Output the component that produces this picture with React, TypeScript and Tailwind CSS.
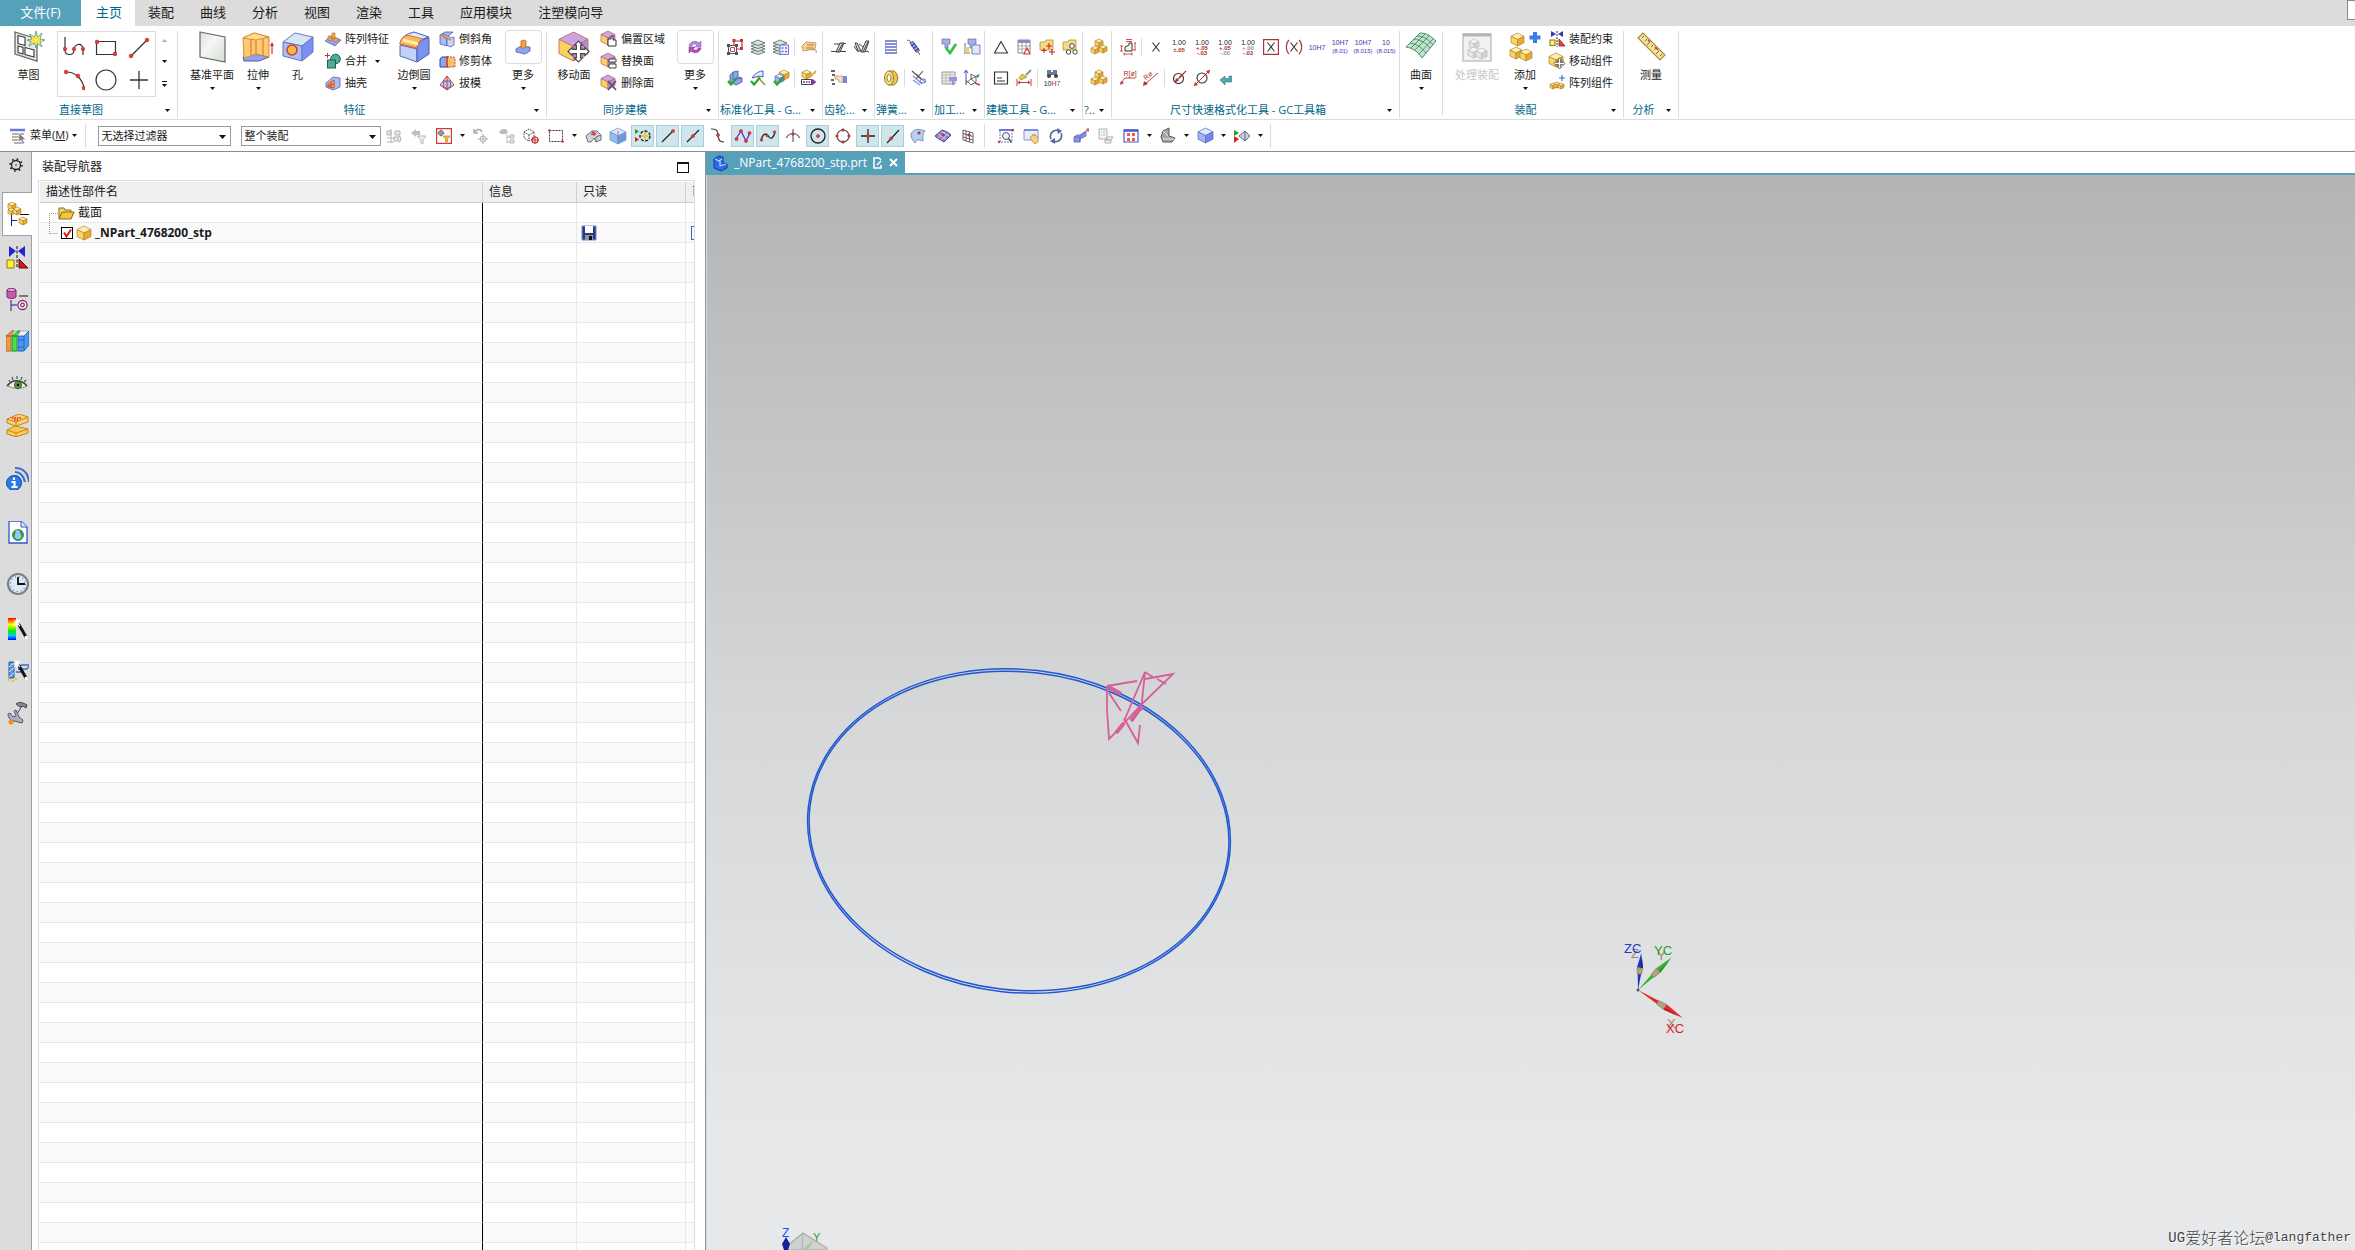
import React from 'react';

type CubeColors = [string, string, string, string];

const GOLD: CubeColors = ['#ffefb4', '#fad464', '#e6ab34', '#b5852a'];
const BLUE: CubeColors = ['#dfeaf8', '#9db4f5', '#6f86ea', '#5a6abc'];
const GREY: CubeColors = ['#f4f4f4', '#e6e6e6', '#d2d2d2', '#bcbcbc'];
const PINK: CubeColors = ['#d0a4e6', '#fbd065', '#b98bd8', '#b0605a'];

const Cube: React.FC<{ x: number; y: number; s: number; c?: CubeColors }> = ({ x, y, s, c = GOLD }) => {
  const h = s / 2;
  const q = s / 4;
  return (
    <g stroke={c[3]} strokeWidth={s > 16 ? 1 : 0.7} strokeLinejoin="round">
      <polygon points={`${x + h},${y} ${x + s},${y + q} ${x + h},${y + h} ${x},${y + q}`} fill={c[0]} />
      <polygon points={`${x},${y + q} ${x + h},${y + h} ${x + h},${y + s} ${x},${y + s - q}`} fill={c[1]} />
      <polygon points={`${x + s},${y + q} ${x + h},${y + h} ${x + h},${y + s} ${x + s},${y + s - q}`} fill={c[2]} />
    </g>
  );
};

const Dots: React.FC<{ at: number[][]; r?: number }> = ({ at, r = 1.6 }) => (
  <>
    {at.map(([x, y]) => (
      <circle key={`${x}-${y}`} cx={x} cy={y} r={r} fill="#e23a3a" stroke="#b02020" strokeWidth="0.5" />
    ))}
  </>
);

const Check: React.FC = () => <path d="M1 11l3 3.500L10 7.500" fill="none" stroke="#2fa52f" strokeWidth="2.2" />;

const FourWay: React.FC<{ x: number; y: number; s: number }> = ({ x, y, s }) => (
  <path
    transform={`translate(${x} ${y}) scale(${s / 20})`}
    d="M10 0l4 4h-2v4h4V6l4 4-4 4v-2h-4v4h2l-4 4-4-4h2v-4H4v2l-4-4 4-4v2h4V4H6z"
    fill="#fff"
    stroke="#4a4a4a"
    strokeWidth={s > 16 ? 1.1 : 1.6}
  />
);

const Wand: React.FC = () => (
  <>
    <path d="M9 4l8 14" stroke="#111" strokeWidth="3" />
    <path d="M16.5 17l1.500 3" stroke="#fff" strokeWidth="2.5" />
    <path d="M8 0v8M4 4h8M5 1l6 6M11 1L5 7" stroke="#fff" strokeWidth="1.2" />
  </>
);

const Tolerance: React.FC<{ top: string; a?: string; b: string; ca?: string; cb?: string }> = ({
  top, a, b, ca = '#b03030', cb = '#b03030',
}) => (
  <g fontFamily="Liberation Sans, sans-serif" textAnchor="middle">
    <text x="8" y="6" fontSize="7" fill="#222">{top}</text>
    {a && <text x="8" y="11" fontSize="6" fontWeight="bold" fill={ca}>{a}</text>}
    <text x="8" y={a ? 16 : 13} fontSize="6" fontWeight="bold" fill={cb}>{b}</text>
  </g>
);

const Fit: React.FC<{ top: string; bottom?: string }> = ({ top, bottom }) => (
  <g fontFamily="Liberation Sans, sans-serif" textAnchor="middle" fill="#3a34b4">
    <text x="8" y={bottom ? 6 : 11} fontSize="7">{top}</text>
    {bottom && <text x="8" y="14" fontSize="6">{bottom}</text>}
  </g>
);

// small icons are drawn on a 16 unit grid
const small: Record<string, React.ReactNode> = {
  patternFeature: (
    <>
      <path d="M0 10l6-5 10 4-6 6z" fill="#8fa6ee" stroke="#5062a8" strokeWidth=".7" />
      <path d="M3 9V5h3v5zM7 7V2h3v6zM9 11V7h4v3z" fill="#f6a94a" stroke="#b66a1a" strokeWidth=".6" />
    </>
  ),
  unite: (
    <>
      <path d="M2.5 0v5M0 2.500h5" stroke="#c83030" />
      <circle cx="10.5" cy="6" r="4.8" fill="#4fae9c" stroke="#245c50" />
      <rect x="2.5" y="7" width="8" height="8" fill="#4fae9c" stroke="#245c50" />
    </>
  ),
  shell: (
    <>
      <path d="M1 8l7-6 7 1v9l-7 3-7-3z" fill="#a9bbf4" stroke="#5062a8" strokeWidth=".8" />
      <path d="M3 9l6-4v8l-6-1z" fill="#f7b05a" stroke="#c0542a" />
      <path d="M6 7v6M9 9l-6 2" stroke="#d63c20" />
    </>
  ),
  chamfer: (
    <>
      <path d="M1 4l5-3h8l-6 5v9l-7-2z" fill="#a9bbf4" stroke="#4a5bb0" strokeWidth=".8" />
      <path d="M4 3l9 4 2-1v8l-4 2-3-2V8L3 5z" fill="#c9d6fb" stroke="#4a5bb0" strokeWidth=".8" />
      <path d="M2 4l10 5" stroke="#f0822a" strokeWidth="1.8" />
    </>
  ),
  trimBody: (
    <>
      <path d="M1 6l2-2h7v10H1z" fill="#8fa6ee" stroke="#33409c" />
      <path d="M8 4h7l1 2v8H8z" fill="#f9c06a" stroke="#c04a2a" strokeDasharray="2 1" />
      <path d="M8 3v11" stroke="#c04a2a" strokeWidth="1.5" />
    </>
  ),
  draft: (
    <>
      <path d="M8 1L1 10l7 5 7-5z" fill="#f4d0c8" stroke="#c0403a" />
      <path d="M5 6h6l1 5-4 3-4-3z" fill="#b7c6f8" stroke="#5062a8" />
      <path d="M8 1v14" stroke="#c0403a" />
    </>
  ),
  offsetRegion: (
    <>
      <Cube x={0} y={0} s={14} c={PINK} />
      <path d="M7 8h3V5h2v4h3v6H7z" fill="#fff" stroke="#333" />
    </>
  ),
  replaceFace: (
    <>
      <Cube x={0} y={0} s={14} c={PINK} />
      <path d="M8 6h7v3H8zM8 11h7v4H8z" fill="#fff" stroke="#444" />
    </>
  ),
  deleteFace: (
    <>
      <Cube x={0} y={0} s={14} c={PINK} />
      <path d="M7 6l8 9M15 6l-8 9" stroke="#555" strokeWidth="1.7" />
    </>
  ),
  constraints: (
    <>
      <path d="M2 0l5 3-5 3zM14 0L9 3l5 3z" fill="#3a34c0" />
      <path d="M8 0v16" stroke="#333" strokeDasharray="2 1" />
      <rect x="1" y="9" width="5" height="5.5" fill="#fff36a" stroke="#8a7a10" />
      <path d="M10 8v7h6z" fill="#e04848" stroke="#8a1a1a" strokeWidth=".8" />
    </>
  ),
  moveComponent: (
    <>
      <Cube x={0} y={0} s={14} />
      <FourWay x={5} y={5} s={11} />
    </>
  ),
  patternComponent: (
    <>
      <path d="M13 0v6M10 3h6" stroke="#3a6ee0" strokeWidth="1.2" />
      <Cube x={1} y={8} s={6} />
      <Cube x={5} y={7} s={6} />
      <Cube x={9} y={8} s={6} />
    </>
  ),
  attrTool: (
    <>
      <path d="M7 2h8v8H7z" fill="none" stroke="#d03030" strokeWidth="1.2" />
      <path d="M1.500 6.500h8v8h-8z" fill="#fff" stroke="#555" />
      <path d="M3.500 8.500h4v4h-4z" fill="none" stroke="#c05050" />
      <path d="M0 5h3v3H0zM8 5h3v3H8zM0 13h3v3H0zM8 13h3v3H8z" fill="#4a5068" />
      <path d="M5.500 0h3v3h-3zM13 0h3v3h-3zM13 8h3v3h-3z" fill="#d03030" />
    </>
  ),
  layers: (
    <>
      {[13, 10, 7, 4].map((y) => (
        <path key={y} d={`M1 ${y}l7-3 7 3-7 2.500z`} fill="#cfe6d8" stroke="#51615c" strokeWidth=".8" />
      ))}
    </>
  ),
  layerList: (
    <>
      {[13, 10, 7, 4].map((y) => (
        <path key={y} d={`M0 ${y}l7-3 7 3-7 2.500z`} fill="#cfe6d8" stroke="#51615c" strokeWidth=".8" />
      ))}
      <path d="M7 6h8.500v9.500H7z" fill="#eef0ff" stroke="#6a72dc" />
      <path d="M8.500 9h2M12 9h2M8.500 12.500h2M12 12.500h2" stroke="#6a72dc" strokeWidth="1.5" />
    </>
  ),
  tag: (
    <>
      <path d="M1 7l4-4 10 1-1 6-12 2z" fill="#fad096" stroke="#d09a50" />
      <path d="M6 6h7M5 9h7M11 11c3-1 5 0 4 3" fill="none" stroke="#8a6a40" strokeWidth=".8" />
    </>
  ),
  blockCheck: (
    <>
      <path d="M3 5l3-3 5-1v6l4 1v4l-6 3-6-3z" fill="#8ea2ee" stroke="#4356a6" strokeWidth=".8" />
      <path d="M6 2v8l9-2" fill="none" stroke="#4356a6" strokeWidth=".7" />
      <Check />
    </>
  ),
  draftCheck: (
    <>
      <path d="M2 8c3-5 8-7 11-7v6l-4-1z" fill="#e8edff" stroke="#4356c6" />
      <path d="M7 6l8 9" stroke="#a89040" strokeWidth="1.6" />
      <Check />
    </>
  ),
  asmCheck: (
    <>
      <Cube x={6} y={0} s={10} />
      <Cube x={2} y={4} s={9} c={BLUE} />
      <Check />
    </>
  ),
  partEdit: (
    <>
      <Cube x={1} y={0} s={9} />
      <path d="M9 7l6-6" stroke="#d0b040" strokeWidth="1.8" />
      <path d="M.5 9.500h10v5H.5z" fill="#fff" stroke="#444" />
      <path d="M2 12h2M5 12h1.500M7.500 12h1.500" stroke="#6a30a0" strokeWidth="1.5" />
      <path d="M11 8.500l4.500 3.500-4.500 3.500z" fill="#8a3ab0" />
    </>
  ),
  gear1: (
    <>
      <path d="M5 13L9 4h4L9 13z" fill="#d4d8d8" stroke="#444" />
      <path d="M0 12.500h5M3 5h6M13 4.500h2M9 12.500h6M7 13l5-9" fill="none" stroke="#444" />
    </>
  ),
  gear2: (
    <>
      <path d="M1 4l3 8h3L3 4zM7 13l5-11h3l-4 11z" fill="#d4d8d8" stroke="#444" />
      <path d="M0 7l4 6M9 13l5-10M11 12l4 1M5 5l4 3" fill="none" stroke="#444" />
    </>
  ),
  gearHand: (
    <>
      <path d="M0 1h4M1 5h3M0 10h3M1 14h3" stroke="#333" strokeWidth="1.3" />
      <path d="M4 6h8v6H8L7 9H4z" fill="#fbe0c0" stroke="#b08850" strokeWidth=".7" />
      <path d="M12 6h4v7h-4z" fill="#7a86d8" />
    </>
  ),
  spring: (
    <>
      {[2, 5, 8, 11, 14].map((y) => (
        <path key={y} d={`M2 ${y}h12`} stroke="#5560c0" strokeWidth="1.4" />
      ))}
      <path d="M2.500 1v14M13.500 1v14" stroke="#8890c8" strokeWidth=".8" />
    </>
  ),
  springDiag: (
    <>
      <path d="M1 2c2-2 4 0 3 2M12 13c1 1 2 2 1 3" fill="none" stroke="#555" />
      <path d="M4 4l3-1.500 6.500 9-3 2z" fill="#a0a8e0" stroke="#4450a0" />
      <path d="M5 7l4-2.500M7 9.500l4-2.500M9 12l4-2.500" stroke="#333c90" strokeWidth="1.1" />
    </>
  ),
  springDisc: (
    <>
      <path d="M6 1h5c5 3 5 11 0 14H6z" fill="#e8c650" stroke="#9a7a20" />
      <ellipse cx="6" cy="8" rx="4.5" ry="7" fill="#f7e080" stroke="#9a7a20" />
      <ellipse cx="6" cy="8" rx="2" ry="3.5" fill="#fff" stroke="#9a7a20" />
    </>
  ),
  springCut: (
    <>
      <path d="M2 6l9 8M5 4l9 8M2 10l7 5" stroke="#8090d8" strokeWidth="1.2" />
      <path d="M1 1l9 8M12 1L5 9" stroke="#555" strokeWidth="1.1" />
      <ellipse cx="12" cy="11" rx="3" ry="2" fill="none" stroke="#6874c8" />
    </>
  ),
  camCheck: (
    <>
      <path d="M1 0h8v5H7v4H4V5H1z" fill="#a8b0e4" stroke="#6068a8" strokeWidth=".7" />
      <path d="M5 9l4 5 6-9" fill="none" stroke="#35c042" strokeWidth="2.8" />
    </>
  ),
  camList: (
    <>
      <path d="M4 0h8v5h-2v4H6V5H4z" fill="#a8b0e4" stroke="#6068a8" strokeWidth=".7" />
      <path d="M1 4v10M0 14h6" stroke="#6068a8" />
      <path d="M8 6h8v9H8z" fill="#e0e6fb" stroke="#7a84c0" />
      <path d="M1 8h4v6H1z" fill="#e6d070" />
    </>
  ),
  camTable: (
    <>
      <path d="M1 2h13v12H1z" fill="#f0efe0" stroke="#999" />
      <path d="M1 5h13M1 8h13M1 11h13M5 2v12M9 2v12" stroke="#b4b4b4" strokeWidth=".8" />
      <path d="M8 7h8v4h-3v4h-2v-4H8z" fill="#8f98e0" />
    </>
  ),
  camAxis: (
    <>
      <path d="M2 15V1M0 3l2-3 2 3" stroke="#4450b8" fill="none" />
      <path d="M2 13l5-4V4l5 3v5l-5 3-5-5M7 9l8-4M7 9l6 5" fill="none" stroke="#555" strokeWidth=".9" />
      <path d="M12 6l4-2-2 4z" fill="#2f9a4a" />
      <path d="M11 13l5 2" stroke="#c04040" strokeWidth="1.5" />
    </>
  ),
  triangle: <path d="M8 2.500L1.500 14h13z" fill="none" stroke="#333" strokeWidth="1.1" />,
  tableTri: (
    <>
      <path d="M2 1h12v13H2z" fill="#fff" stroke="#888" />
      <path d="M2 1h12v3H2z" fill="#8890c0" />
      <path d="M2 7h12M2 10h12M6 4v10M10 4v10" stroke="#b08a9a" strokeWidth=".8" />
      <path d="M11 9l-3 6h6z" fill="#fff" stroke="#d03030" strokeWidth="1.1" />
    </>
  ),
  folderStar: (
    <>
      <path d="M1 3h5l1-2h7v10H1z" fill="#f2dc88" stroke="#b09030" strokeWidth=".8" />
      <path d="M10 4v6M7 7h6M5 9v5M2.500 11.500h5M13 10v6M10 13h6" stroke="#c82020" strokeWidth="1.1" />
    </>
  ),
  folderRings: (
    <>
      <path d="M1 3h5l1-2h7v10H1z" fill="#f2dc88" stroke="#b09030" strokeWidth=".8" />
      <g fill="#fff" stroke="#444">
        <circle cx="10" cy="7" r="2.4" />
        <circle cx="6.5" cy="13" r="2.2" />
        <circle cx="13" cy="13" r="2.2" />
      </g>
    </>
  ),
  note: (
    <>
      <path d="M1.500 2h13v12h-13z" fill="#fff" stroke="#333" strokeWidth="1.2" />
      <path d="M4 8h5M4 11h8" stroke="#333" />
    </>
  ),
  brushDim: (
    <>
      <path d="M15 0l-5 5" stroke="#8a94a0" strokeWidth="2" />
      <path d="M6 4l5 3-6 3-2-2z" fill="#e8c850" stroke="#a08020" strokeWidth=".7" />
      <path d="M1 9v7M15 9v7M2 12.500h12M4 11l-2 1.500L4 14M12 11l2 1.500-2 1.500" fill="none" stroke="#c83a3a" />
    </>
  ),
  findFit: (
    <>
      <path d="M3 0h4v4H3zM9 0h4v4H9zM3 2h10v3H3z" fill="#6a7a98" />
      <circle cx="5" cy="6" r="2" fill="#444" />
      <circle cx="12" cy="6" r="2" fill="#444" />
      <text x="8" y="16" fontSize="7" textAnchor="middle" fontFamily="Liberation Sans, sans-serif" fill="#222">
        10<tspan fill="#b03030">H7</tspan>
      </text>
    </>
  ),
  stack: (
    <>
      <Cube x={4} y={0} s={8} />
      <Cube x={0} y={7} s={8} />
      <Cube x={8} y={6} s={8} />
    </>
  ),
  dimAuto: (
    <>
      <path d="M5 12V8l4-2V4h3v8z" fill="#f4f4f4" stroke="#333" />
      <path d="M6 .5h6M6 2.500h6M0 7h3M1.500 7v5M0 12h3M14 4h2M15 4v7M13 11h3M4 15h8M4 13.500v3M12 13.500v3" stroke="#c83a3a" strokeWidth=".9" />
    </>
  ),
  x: <path d="M4.500 3.500l7 9M11.500 3.500l-7 9" stroke="#333" strokeWidth="1.1" />,
  tolSym: <Tolerance top="1.00" b="±.05" />,
  tolBoth: <Tolerance top="1.00" a="+.05" b="-.03" />,
  tolUpper: <Tolerance top="1.00" a="+.05" b="-.00" cb="#999" />,
  tolLower: <Tolerance top="1.00" a="+.00" b="-.03" ca="#999" />,
  boxX: (
    <>
      <path d="M.6 .6h14.800v14.800H.6z" fill="#fff" stroke="#a03a3a" strokeWidth="1.2" />
      <path d="M4.500 3.500l7 9M11.500 3.500l-7 9" stroke="#333" strokeWidth="1.1" />
    </>
  ),
  parenX: (
    <>
      <path d="M3 1C-.5 4-.5 12 3 15M13 1c3.500 3 3.500 11 0 14" fill="none" stroke="#b03a3a" strokeWidth="1.2" />
      <path d="M4.500 3.500l7 9M11.500 3.500l-7 9" stroke="#333" strokeWidth="1.1" />
    </>
  ),
  fit: <Fit top="10H7" />,
  fitLimits: <Fit top="10H7" bottom="(8.01)" />,
  fitDev: <Fit top="10H7" bottom="(8.015)" />,
  fitOnly: <Fit top="10" bottom="(8.015)" />,
  leader: (
    <>
      <path d="M15 8H5l-4 5" fill="none" stroke="#b04a4a" />
      <path d="M0 15l1-4 3 2z" fill="#b03030" />
      <text x="10" y="6" fontSize="7" textAnchor="middle" fontFamily="Liberation Sans, sans-serif" fill="#b03030">R[ø]</text>
    </>
  ),
  leaderDiag: (
    <>
      <path d="M2 14L15 3" stroke="#b04a4a" />
      <path d="M0 16l1-5 4 3z" fill="#b03030" />
      <text x="1" y="9" fontSize="7" fontFamily="Liberation Sans, sans-serif" fill="#b03030" transform="rotate(-38 4 7)">Rø</text>
    </>
  ),
  diaIn: (
    <>
      <circle cx="7.5" cy="8.5" r="5" fill="none" stroke="#333" strokeWidth="1.1" />
      <path d="M4 12L15 1" stroke="#c02a2a" strokeWidth="1.1" />
      <path d="M4 12l1-4 3 3zM11 5l-3 1 2 2z" fill="#c02a2a" />
    </>
  ),
  diaOut: (
    <>
      <circle cx="8" cy="8" r="5" fill="none" stroke="#333" strokeWidth="1.1" />
      <path d="M0 16L16 0" stroke="#c02a2a" />
      <path d="M16 0l-4 1 3 3zM0 16l1-4 3 3z" fill="#c02a2a" />
    </>
  ),
  back: <path d="M3 10l5-4v2.500h4V6h2.500v6H8v3z" fill="#52a7b5" stroke="#2b7480" strokeWidth=".6" />,
  menu: (
    <>
      <path d="M0 2h15" stroke="#6a78d8" strokeWidth="2.5" />
      <path d="M2 6h12M2 9h9M2 12h11M4 15h9" stroke="#999" strokeWidth="1.4" />
      <path d="M9 5v9l2-2 2 4 1.500-1-2-3.500h3z" fill="#777" stroke="#eee" strokeWidth=".6" />
    </>
  ),
  treeOff: <path d="M1 3h4v4H1zM5 1v14M1 10h8M1 14h7M9 3h5v4H9zM8 9h4v4H8zM12 8a3 3 0 1 1 0 6" fill="#e8e8e8" stroke="#b4b4b4" />,
  filterOff: (
    <>
      <path d="M0 5l5-4v2h4v4H5v2z" fill="#bdbdbd" />
      <path d="M6 8h9l-3 4v4l-2-1v-3z" fill="#eee" stroke="#bbb" />
    </>
  ),
  filterBox: (
    <>
      <path d="M.6 .6h14.800v14.800H.6z" fill="#fff" stroke="#d03a3a" strokeWidth="1.2" />
      <circle cx="5" cy="5" r="2.4" fill="none" stroke="#555" />
      <path d="M5 1.500v7M1.500 5h7" stroke="#555" strokeWidth=".8" />
      <path d="M7 8h7l-2.500 3v3h-2v-3z" fill="#f0b838" stroke="#b08018" strokeWidth=".6" />
    </>
  ),
  rotOff: (
    <>
      <path d="M1 5V1M1 5h4M1 5c3-5 7-4 8-1" fill="none" stroke="#aaa" strokeWidth="1.4" />
      <circle cx="10" cy="11" r="3" fill="none" stroke="#b0b0b0" />
      <path d="M10 6v10M5 11h10" stroke="#b0b0b0" />
    </>
  ),
  binOff: (
    <>
      <path d="M1 4l3-3h4l2 3-2 2H3z" fill="#bbb" />
      <path d="M9 6v9M9 9h3M9 14h3M12 7h4v3h-4zM12 12h4v3h-4z" fill="#e2e2e2" stroke="#b8b8b8" />
    </>
  ),
  pickCube: (
    <>
      <path d="M6 1L1 4v6l5 3 5-3V4zM1 4l5 3 5-3M6 7v6" fill="none" stroke="#333" strokeDasharray="1.5 1" strokeWidth=".9" />
      <circle cx="12" cy="12" r="3" fill="none" stroke="#c83030" strokeWidth="1.2" />
      <path d="M12 8v8M8 12h8" stroke="#c83030" />
    </>
  ),
  pickRect: (
    <>
      <path d="M1.500 2.500h13v11h-13z" fill="none" stroke="#333" strokeDasharray="2 1" />
      <Dots at={[[1.5, 2.5], [14.5, 13.5]]} r={1.1} />
    </>
  ),
  body: (
    <>
      <path d="M1 8l6-5h5l4 4v5l-5 2-2-4-3 4H3z" fill="#ccd4de" stroke="#6a727a" />
      <path d="M7 4l4 2M6 6l4 1" stroke="#d84040" strokeWidth="1.5" />
      <path d="M11 14V9l5-2" fill="none" stroke="#6a727a" />
    </>
  ),
  blueBox: (
    <>
      <Cube x={0} y={0} s={16} c={['#d4e8fa', '#8cc0f2', '#6a9ae6', '#6a90cc']} />
      <path d="M8 3v9" stroke="#e05a70" />
    </>
  ),
  snapAll: (
    <>
      <path d="M0 1l4 2.500L0 6z" fill="#22a033" />
      <path d="M0 9l4 2.500L0 14z" fill="#d82222" />
      <circle cx="10" cy="8" r="5" fill="none" stroke="#222" strokeWidth="1.4" strokeDasharray="3 1.5" />
      <path d="M10 4v8M6 8h8" stroke="#e8c020" strokeWidth="1.6" />
    </>
  ),
  snapEnd: (<><path d="M2 14L13 3" stroke="#222" strokeWidth="1.2" /><Dots at={[[13, 3]]} /></>),
  snapMid: (<><path d="M2 14L14 2" stroke="#222" strokeWidth="1.2" /><Dots at={[[8, 8]]} /></>),
  snapCtrl: (<><path d="M1 1c8 0 6 3 7 7s1 6 6 6" fill="none" stroke="#444" strokeWidth="1.2" /><Dots at={[[8, 7]]} /></>),
  snapPoly: (<><path d="M1 11L6 3l5 10 4-8" fill="none" stroke="#7a34c0" strokeWidth="1.4" /><Dots at={[[1.5, 11], [6, 3], [11, 13], [14.5, 5]]} /></>),
  snapSpline: (<><path d="M1 12c3-9 6-6 8-3s5 0 6-5" fill="none" stroke="#222" strokeWidth="1.3" /><Dots at={[[1.5, 12], [7, 7.5], [14.5, 4]]} r={1.3} /></>),
  snapInt: (<><path d="M1 10c4-6 10-6 14 0M8 1v13" fill="none" stroke="#555" strokeWidth="1.1" /><Dots at={[[8, 6]]} r={1.3} /></>),
  snapCenter: (<><circle cx="8" cy="8" r="7" fill="none" stroke="#222" strokeWidth="1.3" /><Dots at={[[8, 8]]} /></>),
  snapQuad: (<><circle cx="8" cy="8" r="6" fill="none" stroke="#555" strokeWidth="1.1" /><Dots at={[[8, 2], [8, 14], [2, 8], [14, 8]]} r={1.3} /></>),
  snapPoint: (<><path d="M8 1v14M1 8h14" stroke="#222" strokeWidth="1.3" /><Dots at={[[8, 8]]} /></>),
  snapOn: (<><path d="M2 15L14 2" stroke="#222" strokeWidth="1.2" /><Dots at={[[6, 10.5]]} /></>),
  snapFace: (
    <>
      <path d="M1 6c3-6 8-5 14-3-3 3-2 6-2 10-5-2-7-1-8 2C3 12 1 11 1 6z" fill="#b4d0f6" stroke="#7b8fb8" />
      <Dots at={[[9, 5]]} r={1.3} />
    </>
  ),
  snapGrid: (
    <>
      <path d="M0 8l7-6c3 1 6 2 9 5l-7 7C6 12 3 11 0 8z" fill="#8a84d0" stroke="#4a4680" />
      <path d="M3 6l8 5M6 3l8 5M3 10l7-6M6 12l7-6" stroke="#dcd8ff" strokeWidth=".8" />
      <Dots at={[[8, 7]]} r={1.3} />
    </>
  ),
  snapMesh: (
    <>
      <path d="M3 2l10 3v10L3 12zM3 5.500l10 3M3 9l10 3M6 3v10M9.500 4v10" fill="none" stroke="#555" strokeWidth=".9" />
      <Dots at={[[9, 7]]} r={1.3} />
    </>
  ),
  zoomFit: (
    <>
      <path d="M1 2h14" stroke="#6a78d8" strokeWidth="2" />
      <path d="M2 3v11h12V3" fill="none" stroke="#6a78d8" strokeDasharray="2 1" />
      <circle cx="8" cy="8" r="3.5" fill="#eef" stroke="#555" />
      <path d="M10.500 10.500l3 4" stroke="#555" strokeWidth="1.5" />
      <Dots at={[[15, 2], [1, 14]]} r={1} />
    </>
  ),
  pan: (
    <>
      <path d="M1 2h14v10H1z" fill="#e8ebf8" stroke="#8c94c8" />
      <path d="M1 2h14" stroke="#6a78d8" strokeWidth="1.5" />
      <path d="M7 9l2-1 1-2 1 2 1-2 1 2 2 1v5l-3 2-3-3z" fill="#f4cf90" stroke="#b58a40" strokeWidth=".7" />
    </>
  ),
  rotate: (
    <>
      <path d="M3 11A6 6 0 0 1 11 3M13 5a6 6 0 0 1-8 8" fill="none" stroke="#5560a8" strokeWidth="1.6" />
      <path d="M9 0l5 3-4 3zM7 10l-5 3 5 3z" fill="#5560a8" />
    </>
  ),
  persp: (
    <>
      <path d="M1 9l3-2h3l6-4v5l-6 3v3H1z" fill="#8a96e4" stroke="#5a65b8" strokeWidth=".8" />
      <path d="M1 9h6l6-6M7 9v5" fill="none" stroke="#5a65b8" strokeWidth=".8" />
      <path d="M15 0v4M13 2h3" stroke="#d03030" />
    </>
  ),
  refOff: <path d="M1 1h8v10H1zM3 4h1M5 4h2M3 7h1M5 7h2M7 12l2-3h6l-2 3zM7 12h6v3H7z" fill="#f4f4f4" stroke="#b0b0b0" />,
  layout: (
    <>
      <path d="M1 2h14v12H1z" fill="#fff" stroke="#4a5bc8" strokeWidth="1.2" />
      <path d="M1 2.500h14" stroke="#4a5bc8" strokeWidth="2.5" />
      <path d="M4 5h3v3H4zM9 5h3v3H9zM4 10h3v3H4zM9 10h3v3H9z" fill="#e8604a" />
    </>
  ),
  section: (
    <>
      <path d="M1 9l2-6 6-3v8l6 2-3 4H3z" fill="#a4a8ac" stroke="#555" />
      <path d="M3 11h11M3 3l5 5" stroke="#e4e4e4" />
    </>
  ),
  shaded: <Cube x={1} y={0} s={15} c={BLUE} />,
  visible: (
    <>
      <path d="M0 2l5 3-5 3z" fill="#22a033" />
      <path d="M0 8l5 3-5 4z" fill="#d82222" />
      <path d="M5 8l6-5 5 5-5 5z" fill="#c9d0ee" stroke="#666" />
      <path d="M11 3v10" stroke="#666" />
    </>
  ),
  save: (
    <>
      <path d="M1 1h14v14H1z" fill="#2a3a7c" stroke="#7a8ad8" />
      <path d="M4 1h8v7H4z" fill="#fff" />
      <path d="M4 10h8v5H4z" fill="#8899a8" />
      <path d="M8 11h3v4H8z" fill="#111" />
    </>
  ),
  folder: (
    <>
      <path d="M1 14V3h5l1 2h6v3" fill="#f4d878" stroke="#8a6a10" />
      <path d="M1 14l3-7h12l-3 7z" fill="#f8c440" stroke="#8a6a10" />
    </>
  ),
  part: <Cube x={1} y={1} s={14} />,
  partBlue: (
    <>
      <path d="M2 4l5-3 4 1v6l4 1v4l-6 3-7-3z" fill="#2e6af0" stroke="#123a9a" />
      <path d="M3 4l4 2 3-2M8 6v5l6-2" fill="none" stroke="#bcd4ff" strokeWidth="1.2" />
    </>
  ),
};

// ribbon icons on a 32 unit grid
const large: Record<string, React.ReactNode> = {
  sketch: (
    <>
      <path d="M2 1l22 7v22L2 23z" fill="#e6ece4" stroke="#666" strokeWidth="1.3" />
      <path d="M5 4.500l7 2v8l-7-2zM5 15l5 1.500V23l-5-1.500zM12 16.500l9 2.500v7l-9-2.500z" fill="#fff" stroke="#444" strokeWidth="1.2" />
      <path d="M23 0l1.500 6L29 2l-2 6 5 1-5 2 2 5-4.500-3.500L23 17l-1.500-5L16 15l2-4.500L14 9l5-1-2.500-5L21.500 6z" fill="#f6e84a" stroke="#3a8ab0" strokeWidth=".7" />
    </>
  ),
  datum: <path d="M4 1l25 5v25L4 26z" fill="url(#datumFill)" stroke="#666" strokeWidth="1.2" />,
  extrude: (
    <>
      <path d="M1 26l12-3 14 3-10 4H2z" fill="#8ea4f0" stroke="#4a5bb0" />
      <path d="M1 7l11-5 15 4v20l-13-3-12 4z" fill="#fccb70" stroke="#e0853a" />
      <path d="M1 7l13 2 13-3L12 2z" fill="#fde08a" stroke="#e0853a" />
      <path d="M14 9v14M9 8v16M21 8v17" fill="none" stroke="#e0683a" />
      <path d="M30 23V13" stroke="#c83030" strokeWidth="1.2" />
      <path d="M28 15l2-4 2 4z" fill="#c83030" />
    </>
  ),
  hole: (
    <>
      <path d="M1 11L13 2l18 4-11 9z" fill="#d7e6f4" stroke="#6478c0" />
      <path d="M1 11l19 4v15L1 25z" fill="#a9bdf6" stroke="#6478c0" />
      <path d="M20 15L31 6v15l-11 9z" fill="#7c8ff2" stroke="#6478c0" />
      <circle cx="10" cy="19" r="5" fill="#f9b648" stroke="#d0402a" strokeWidth="1.5" />
    </>
  ),
  blend: (
    <>
      <path d="M2 14v11l17 6V18z" fill="#c3d1f8" stroke="#5a6bb8" />
      <path d="M19 31V17c0-5 4-9 12-10v16z" fill="#7c92ee" stroke="#4a5bb8" />
      <path d="M16 1l15 5c-8 2-12 5-12 11L2 13C3 6 8 3 16 1z" fill="#dfe8f8" stroke="#4a5bb8" />
      <path d="M9 4c-4 2-7 5-7 9l17 4c0-4 2-7 6-9z" fill="#fbb95a" stroke="#e0683a" />
      <path d="M5 9l15 4" stroke="#fff2a8" strokeWidth="3" />
    </>
  ),
  moveFace: (
    <>
      <Cube x={1} y={1} s={29} c={['#cfa2e4', '#fbd160', '#b488d6', '#c07a70']} />
      <FourWay x={10} y={10} s={21} />
    </>
  ),
  surface: (
    <>
      <path d="M1 16L15 2c6 0 11 3 16 8L17 27C13 21 8 17 1 16z" fill="#bfe2cd" stroke="#4a8a68" />
      <path d="M5 12c7 1 12 5 16 10M9 8c7 1 12 4 16 9M12 5c7 0 12 4 16 9M6 17L20 3M10 19L24 5M14 23L28 8" fill="none" stroke="#4a8a68" strokeWidth=".9" />
    </>
  ),
  process: (
    <>
      <path d="M2 3h28v27H2z" fill="#f2f2f2" stroke="#c4c4c4" strokeWidth="1.5" />
      <path d="M2 4h28" stroke="#b4b4b4" strokeWidth="3" />
      <Cube x={8} y={8} s={10} c={GREY} />
      <Cube x={7} y={16} s={11} c={GREY} />
      <Cube x={15} y={17} s={11} c={GREY} />
    </>
  ),
  add: (
    <>
      <Cube x={2} y={2} s={13} />
      <Cube x={1} y={16} s={12} />
      <Cube x={11} y={18} s={12} />
      <path d="M26 1v11M20.500 6.500h11" stroke="#3a7ce8" strokeWidth="4" />
    </>
  ),
  measure: (
    <>
      <path d="M8 2L3 7l22 22 5-5z" fill="#f7e48c" stroke="#a88a40" strokeWidth="1.2" />
      <path d="M9 5l-2 2M12 8l-2 2M15 11l-3 3M18 14l-2 2M21 17l-2 2M24 20l-3 3M27 23l-2 2" stroke="#5a60b8" />
      <path d="M13 9l2 2M20 16l3 3" stroke="#d04040" strokeWidth="1.4" />
    </>
  ),
};

const gallery: { label: string; art: React.ReactNode }[] = [
  {
    label: '轮廓',
    art: (<><path d="M2 0v13c0 6 9 6 9 0s9-9 9 0v5" fill="none" stroke="#333" strokeWidth="1.2" /><Dots at={[[2, 12], [11, 12], [20, 12]]} r={1.8} /></>),
  },
  {
    label: '矩形',
    art: (<><path d="M1.500 4.500h19v13h-19z" fill="none" stroke="#333" strokeWidth="1.2" /><Dots at={[[2, 5], [20, 17]]} r={1.9} /></>),
  },
  {
    label: '直线',
    art: (<><path d="M3 19L19 3" fill="none" stroke="#333" strokeWidth="1.2" /><Dots at={[[3, 19], [19, 3]]} r={1.9} /></>),
  },
  {
    label: '圆弧',
    art: (<><path d="M3 3c9 0 16 6 18 16" fill="none" stroke="#333" strokeWidth="1.2" /><Dots at={[[3, 3], [15, 7], [21, 19]]} r={1.9} /></>),
  },
  { label: '圆', art: <circle cx="11" cy="11" r="10" fill="none" stroke="#333" strokeWidth="1.2" /> },
  { label: '点', art: <path d="M11 2v18M2 11h18" stroke="#333" strokeWidth="1.3" /> },
];

const Icon: React.FC<{ name: string }> = ({ name }) => (
  <svg viewBox="0 0 16 16" className="size-4 shrink-0 overflow-visible" aria-hidden="true">
    {small[name]}
  </svg>
);

const Arrow: React.FC<{ bar?: boolean; up?: boolean }> = ({ bar, up }) => (
  <svg width="5" height={bar ? 6 : 3} className="shrink-0" aria-hidden="true">
    {bar && <path d="M0 .5h5" stroke="#111" />}
    <path d={up ? 'M0 3h5L2.500 0z' : bar ? 'M0 3h5L2.500 6z' : 'M0 0h5L2.500 3z'} fill={up ? '#aaa' : '#111'} />
  </svg>
);

const BigButton: React.FC<{ icon: string; label: string; width: string; arrow?: boolean; disabled?: boolean }> = ({
  icon, label, width, arrow, disabled,
}) => (
  <button type="button" disabled={disabled} className={`flex shrink-0 flex-col items-center pt-[5px] ${width}`}>
    <svg viewBox="0 0 32 32" className="size-8" aria-hidden="true">{large[icon]}</svg>
    <span className={`mt-1 mb-1 text-[11px] leading-4 whitespace-nowrap ${disabled ? 'text-[#c8c8c8]' : ''}`}>{label}</span>
    {arrow && <Arrow />}
  </button>
);

const SmallColumn: React.FC<{ items: [string, string, boolean?][] }> = ({ items }) => (
  <div className="flex shrink-0 flex-col pt-0.5">
    {items.map(([icon, label, arrow]) => (
      <button key={label} type="button" className="flex h-[22px] items-center gap-1 text-[11px] whitespace-nowrap">
        <Icon name={icon} />
        {label}
        {arrow && <span className="ml-1"><Arrow /></span>}
      </button>
    ))}
  </div>
);

const MoreButton: React.FC<{ children: React.ReactNode }> = ({ children }) => (
  <button type="button" className="flex w-[46px] shrink-0 flex-col items-center pt-1 text-[11px]">
    <span className="flex h-[34px] w-[37px] items-center justify-center rounded-sm border border-[#dcdcdc]">{children}</span>
    <span className="mt-[3px] mb-1 leading-4">更多</span>
    <Arrow />
  </button>
);

const Group: React.FC<{ title?: string; left?: boolean; width: string; children: React.ReactNode }> = ({
  title, left, width, children,
}) => (
  <section className={`flex shrink-0 flex-col pb-1 ${width}`}>
    <div className="mt-[5px] flex grow flex-col border-r border-[#dcdcdc]">
      <div className="-mt-[5px] flex h-[76px]">{children}</div>
      {title && (
        <div className="flex h-4 items-center text-[11px] leading-4 text-[#00678c]">
          <span className={`grow pl-px whitespace-nowrap ${left ? 'text-left' : 'text-center'}`}>{title}</span>
          <button type="button" aria-label={`${title} 选项`} className="mr-1 flex w-3 shrink-0 justify-center"><Arrow /></button>
        </div>
      )}
    </div>
  </section>
);

const IconRows: React.FC<{ rows: string[][] }> = ({ rows }) => (
  <div className="flex flex-col pt-[5px] pl-1">
    {rows.map((row, i) => (
      <div key={i} className="flex h-[31px] items-center">
        {row.map((name, j) =>
          name === '|' ? (
            <span key={j} className="mx-0.5 h-[18px] w-px bg-[#dcdcdc]" />
          ) : (
            <button key={j} type="button" aria-label={name} className="flex w-[23px] shrink-0 justify-center"><Icon name={name} /></button>
          ),
        )}
      </div>
    ))}
  </div>
);

const Ribbon: React.FC = () => (
  <div className="flex h-[94px] shrink-0 overflow-hidden border-b border-[#dcdcdc] bg-white">
    <Group title="直接草图" width="w-[178px]">
      <BigButton icon="sketch" label="草图" width="w-[57px]" />
      <div className="mt-[5px] grid h-[66px] w-[99px] shrink-0 grid-cols-3 border border-[#dcdcdc]">
        {gallery.map(({ label, art }) => (
          <button key={label} type="button" aria-label={label} className="flex items-center justify-center">
            <svg viewBox="0 0 22 22" className="size-[22px]" aria-hidden="true">{art}</svg>
          </button>
        ))}
      </div>
      <div className="flex h-[70px] w-[17px] flex-col items-center justify-around pt-1">
        <button type="button" aria-label="上翻"><Arrow up /></button>
        <button type="button" aria-label="下翻"><Arrow /></button>
        <button type="button" aria-label="展开"><Arrow bar /></button>
      </div>
    </Group>
    <Group title="特征" width="w-[369px]">
      <div className="w-2.5 shrink-0" />
      <BigButton icon="datum" label="基准平面" width="w-12" arrow />
      <BigButton icon="extrude" label="拉伸" width="w-11" arrow />
      <BigButton icon="hole" label="孔" width="w-[35px]" />
      <div className="w-2.5 shrink-0" />
      <SmallColumn items={[['patternFeature', '阵列特征'], ['unite', '合并', true], ['shell', '抽壳']]} />
      <BigButton icon="blend" label="边倒圆" width="w-[50px]" arrow />
      <SmallColumn items={[['chamfer', '倒斜角'], ['trimBody', '修剪体'], ['draft', '拔模']]} />
      <div className="grow" />
      <MoreButton>
        <svg viewBox="0 0 16 16" className="size-4" aria-hidden="true">
          <path d="M1 10l5-3 9 1v4l-5 3-9-2z" fill="#8ea4f0" stroke="#4a5bb0" strokeWidth=".8" />
          <path d="M6 9V2l3-1 2 1v6l-2 1z" fill="#f6a040" stroke="#c06a1a" strokeWidth=".8" />
        </svg>
      </MoreButton>
    </Group>
    <Group title="同步建模" width="w-[172px]">
      <BigButton icon="moveFace" label="移动面" width="w-[54px]" />
      <SmallColumn items={[['offsetRegion', '偏置区域'], ['replaceFace', '替换面'], ['deleteFace', '删除面']]} />
      <div className="grow" />
      <MoreButton>
        <svg viewBox="0 0 16 16" className="size-4" aria-hidden="true">
          <path d="M2 7c1-5 7-6 10-3l2-2v6H8l2-2C8 4 5 5 5 7z" fill="#b58ad8" stroke="#8a5ab0" strokeWidth=".6" />
          <path d="M14 9c-1 5-7 6-10 3l-2 2V8h6l-2 2c2 2 5 1 5-1z" fill="#b050b8" stroke="#8a3a98" strokeWidth=".6" />
        </svg>
      </MoreButton>
    </Group>
    <Group title="标准化工具 - G..." left width="w-[104px]">
      <IconRows rows={[['attrTool', 'layers', 'layerList', '|', 'tag'], ['blockCheck', 'draftCheck', 'asmCheck', '|', 'partEdit']]} />
    </Group>
    <Group title="齿轮..." left width="w-[52px]">
      <IconRows rows={[['gear1', 'gear2'], ['gearHand']]} />
    </Group>
    <Group title="弹簧..." left width="w-[58px]">
      <IconRows rows={[['spring', 'springDiag'], ['springDisc', '|', 'springCut']]} />
    </Group>
    <Group title="加工..." left width="w-[52px]">
      <IconRows rows={[['camCheck', 'camList'], ['camTable', 'camAxis']]} />
    </Group>
    <Group title="建模工具 - G..." left width="w-[98px]">
      <IconRows rows={[['triangle', 'tableTri', 'folderStar', 'folderRings'], ['note', 'brushDim', '|', 'findFit']]} />
    </Group>
    <Group title="?.." left width="w-[29px]">
      <IconRows rows={[['stack'], ['stack']]} />
    </Group>
    <Group title="尺寸快速格式化工具 - GC工具箱" width="w-[288px]">
      <IconRows
        rows={[
          ['dimAuto', '|', 'x', 'tolSym', 'tolBoth', 'tolUpper', 'tolLower', 'boxX', 'parenX', 'fit', 'fitLimits', 'fitDev', 'fitOnly'],
          ['leader', 'leaderDiag', '|', 'diaIn', 'diaOut', 'back'],
        ]}
      />
    </Group>
    <Group width="w-[43px]">
      <BigButton icon="surface" label="曲面" width="w-[42px]" arrow />
    </Group>
    <Group title="装配" width="w-[181px]">
      <div className="w-2.5 shrink-0" />
      <BigButton icon="process" label="处理装配" width="w-12" disabled />
      <BigButton icon="add" label="添加" width="w-12" arrow />
      <SmallColumn items={[['constraints', '装配约束'], ['moveComponent', '移动组件'], ['patternComponent', '阵列组件']]} />
    </Group>
    <Group title="分析" width="w-[55px]">
      <BigButton icon="measure" label="测量" width="w-[54px]" />
    </Group>
  </div>
);

const tabs = ['主页', '装配', '曲线', '分析', '视图', '渲染', '工具', '应用模块', '注塑模向导'];

const TabBar: React.FC = () => (
  <nav className="flex h-[26px] shrink-0 bg-[#dcdcdc] text-[13px] leading-6">
    <button type="button" className="w-[81px] bg-[#54a1b9] pb-0.5 text-white">文件(F)</button>
    <span className="w-0.5 bg-white" />
    {tabs.map((tab, i) => (
      <button key={tab} type="button" className={`px-[13px] pb-0.5 ${i === 0 ? 'bg-white text-[#00678c]' : ''}`}>{tab}</button>
    ))}
    <span className="ml-auto h-5 w-2 border border-r-0 border-[#888] bg-white" />
  </nav>
);

const ToolIcon: React.FC<{ name: string; on?: boolean }> = ({ name, on }) => (
  <button
    type="button"
    aria-label={name}
    className={`mx-px flex h-[22px] w-[23px] shrink-0 items-center justify-center border ${on ? 'border-[#a8d0dc] bg-[#cfe6ec]' : 'border-transparent'}`}
  >
    <Icon name={name} />
  </button>
);

const ToolArrow: React.FC = () => (
  <button type="button" aria-label="更多选项" className="flex w-3 shrink-0 justify-center"><Arrow /></button>
);

const Picker: React.FC<{ label: string; value: string; width: string }> = ({ label, value, width }) => (
  <div className={`relative shrink-0 ${width}`}>
    <select aria-label={label} defaultValue={value} className="block h-5 w-full appearance-none border border-[#999] bg-white pl-0.5 text-[11px] leading-4">
      <option>{value}</option>
    </select>
    <svg width="7" height="4" className="pointer-events-none absolute top-[9px] right-[5px]" aria-hidden="true">
      <path d="M0 0h7L3.500 4z" fill="#111" />
    </svg>
  </div>
);

const snaps: [string, boolean][] = [
  ['body', false], ['blueBox', false], ['snapAll', true], ['snapEnd', true], ['snapMid', true], ['snapCtrl', false],
  ['snapPoly', true], ['snapSpline', true], ['snapInt', false], ['snapCenter', true], ['snapQuad', false],
  ['snapPoint', true], ['snapOn', true], ['snapFace', false], ['snapGrid', false], ['snapMesh', false],
];

const Toolbar: React.FC = () => (
  <div className="flex h-8 shrink-0 items-center border-b border-[#7f9292] bg-white">
    <button type="button" className="flex items-center gap-1 pl-2.5 text-[11px]">
      <Icon name="menu" />
      <span>菜单(<u>M</u>)</span>
      <Arrow />
    </button>
    <span className="mr-3 ml-2 h-6 w-px bg-[#dcdcdc]" />
    <Picker label="选择过滤器" value="无选择过滤器" width="w-[133px]" />
    <div className="w-2.5 shrink-0" />
    <Picker label="选择范围" value="整个装配" width="w-[140px]" />
    {['treeOff', 'filterOff', 'filterBox'].map((n) => <ToolIcon key={n} name={n} />)}
    <ToolArrow />
    {['rotOff', 'binOff', 'pickCube', 'pickRect'].map((n) => <ToolIcon key={n} name={n} />)}
    <ToolArrow />
    {snaps.map(([n, on]) => <ToolIcon key={n} name={n} on={on} />)}
    <span className="mr-2 ml-1 h-6 w-px bg-[#dcdcdc]" />
    {['zoomFit', 'pan', 'rotate', 'persp', 'refOff', 'layout'].map((n) => <ToolIcon key={n} name={n} />)}
    <ToolArrow />
    {['section', 'shaded', 'visible'].map((n) => (
      <React.Fragment key={n}>
        <ToolIcon name={n} />
        <ToolArrow />
      </React.Fragment>
    ))}
    <span className="ml-1 h-6 w-px bg-[#dcdcdc]" />
  </div>
);

const resources: { label: string; height: string; art: React.ReactNode }[] = [
  {
    label: '约束导航器',
    height: 'h-[42px]',
    art: (
      <>
        <path d="M3 0l7 5-7 6zM19 0l-7 5 7 6z" fill="#2222d8" />
        <path d="M11 0v22" stroke="#111" strokeDasharray="3 1.5" />
        <path d="M1 14h7v8H1z" fill="#fff230" stroke="#8a7a10" />
        <path d="M13 13v9h9z" fill="#d81818" stroke="#6a0a0a" />
      </>
    ),
  },
  {
    label: '部件导航器',
    height: 'h-[42px]',
    art: (
      <>
        <path d="M1 2v7c2 2 7 2 9 0V2z" fill="#c45aa8" stroke="#7a2a68" />
        <ellipse cx="5.5" cy="2" rx="4.5" ry="1.5" fill="#e8b0dc" stroke="#7a2a68" />
        <path d="M13 8h9" stroke="#111" />
        <path d="M5 12v11M5 17h6" stroke="#1a1a9a" />
        <circle cx="16.5" cy="17" r="4.5" fill="#fff" stroke="#8a2a78" strokeWidth="1.3" />
        <circle cx="16.5" cy="17" r="1.8" fill="none" stroke="#8a2a78" strokeWidth="1.3" />
      </>
    ),
  },
  {
    label: '重用库',
    height: 'h-[42px]',
    art: (
      <>
        <path d="M0 6l6-5h17v14l-6 6H0z" fill="#f0f0f0" stroke="#889" strokeWidth=".6" />
        <path d="M0 6h5v15H0zM0 6l6-5h2L5 6z" fill="#f09a40" stroke="#a8641a" strokeWidth=".8" />
        <path d="M6 6h5v15H6zM6 6l6-5h2l-3 5z" fill="#4ae04a" stroke="#148a14" strokeWidth=".8" />
        <path d="M12 6h6l5-5v14l-5 6h-6z" fill="#4a98f4" stroke="#1a5ab8" strokeWidth=".8" />
        <path d="M12 10h6M12 17h6M18 6v15" stroke="#1a5ab8" strokeWidth=".8" />
      </>
    ),
  },
  {
    label: '视图管理器',
    height: 'h-[42px]',
    art: (
      <>
        <path d="M2 14c5-7 13-7 19 0-6 3-13 3-19 0z" fill="#f0f0f0" stroke="#888" />
        <path d="M1 14c5-7 14-7 20 0" fill="none" stroke="#444" strokeWidth="1.6" />
        <path d="M4 10L3 8M7 8L6 5M11 7V4M15 8l1-3M18 10l2-2" stroke="#555" strokeWidth="1.2" />
        <circle cx="12" cy="13" r="3.5" fill="#6aaa40" stroke="#2a5a10" />
        <circle cx="12" cy="13" r="1.4" fill="#111" />
      </>
    ),
  },
  {
    label: '模具',
    height: 'h-[42px]',
    art: (
      <>
        <path d="M1 5l12-5 9 3v5l-12 4-9-3z" fill="#fbd070" stroke="#c08a20" />
        <path d="M1 5l9 3 12-5M10 8v4" fill="none" stroke="#c08a20" />
        <path d="M6 4h9M8 6h4" stroke="#d82020" strokeWidth="1.6" strokeDasharray="1.5 1" />
        <path d="M1 16l8-4 13 3v4l-12 4-9-3z" fill="#f8c858" stroke="#c08a20" />
        <path d="M1 16l9 3 12-4M10 19v4" fill="none" stroke="#c08a20" />
      </>
    ),
  },
  {
    label: 'HD3D 工具',
    height: 'mt-1.5 h-13',
    art: (
      <>
        <path d="M9 1c8 0 13 5 14 14M9 5c5 0 9 4 10 10M9 9c3 0 5 2 6 6" fill="none" stroke="#3a6ad0" strokeWidth="2" />
        <circle cx="8" cy="16" r="7.5" fill="#2a7ae8" stroke="#1450a0" />
        <path d="M8 10.500v2.500M5.500 15h3v5M5.500 20h6" fill="none" stroke="#fff" strokeWidth="2.2" />
      </>
    ),
  },
  {
    label: 'Web 浏览器',
    height: 'h-14',
    art: (
      <>
        <path d="M3 0h12l6 6v16H3z" fill="#fff" stroke="#2a5ac8" strokeWidth="1.3" />
        <path d="M15 0v6h6" fill="#d8e6fb" stroke="#2a5ac8" />
        <circle cx="12" cy="14" r="5.5" fill="#3a9a3a" stroke="#2a6a50" strokeWidth=".7" />
        <path d="M11 9c3 0 3 3 4 5s0 4-3 4-4-2-3-4 0-5 2-5z" fill="#8ad0f0" />
      </>
    ),
  },
  {
    label: '历史记录',
    height: 'h-12',
    art: (
      <>
        <circle cx="12" cy="11" r="10" fill="#dce9f6" stroke="#7a8088" strokeWidth="2.2" />
        <path d="M12 4v7h7" fill="none" stroke="#111" strokeWidth="1.8" />
        <circle cx="12" cy="11" r="7.5" fill="none" stroke="#445" strokeDasharray="1 3" />
      </>
    ),
  },
  {
    label: '系统材料',
    height: 'h-[42px]',
    art: (
      <>
        <path d="M2 0h8v22H2z" fill="url(#rainbow)" />
        <g transform="translate(3 1)"><Wand /></g>
      </>
    ),
  },
  {
    label: '加工向导',
    height: 'h-[42px]',
    art: (
      <>
        <path d="M10 5h13M12 9h9l2-3M10 12h8" fill="none" stroke="#3a6ac8" strokeWidth="1.3" />
        <path d="M3 2h5v16H3z" fill="#5a9ae0" stroke="#2a5aa0" />
        <path d="M3 7l5-4M3 12l5-4M3 17l5-4" stroke="#d8ecff" />
        <path d="M2 20h2M6 21h2M9 19h2" stroke="#f0c020" strokeWidth="2" />
        <g transform="translate(3 0)"><Wand /></g>
      </>
    ),
  },
  {
    label: '工具箱',
    height: 'h-[42px]',
    art: (
      <>
        <path d="M10 2c3-3 8-1 11 1l-1 3-3-2-3 1zM16 4l-5 8" fill="#889" stroke="#444" />
        <path d="M2 12l2-1 3 4 3-1-2-5 2-1 3 7 4 3-1 3-8-2c-3 0-6-3-6-7z" fill="#a8aec4" stroke="#556" />
        <circle cx="5" cy="20" r="2.5" fill="#f0901c" />
      </>
    ),
  },
];

const ResourceBar: React.FC = () => (
  <aside className="flex w-8 shrink-0 flex-col border-r border-[#a0a0a0] bg-[#dcdcdc]">
    <button type="button" aria-label="设置" className="flex h-10 justify-center pt-1.5">
      <svg viewBox="0 0 14 14" className="size-3.5" aria-hidden="true">
        <circle cx="7" cy="7" r="4.5" fill="none" stroke="#222" strokeWidth="1.3" />
        <circle cx="7" cy="7" r="6" fill="none" stroke="#222" strokeWidth="1.6" strokeDasharray="1.7 3" />
        <circle cx="7" cy="7" r=".8" fill="#222" />
      </svg>
    </button>
    <button type="button" aria-label="装配导航器" className="-mr-px ml-0.5 flex h-11 items-center justify-center border border-r-0 border-[#a0a0a0] bg-white">
      <svg viewBox="0 0 22 24" className="h-6 w-[22px]" aria-hidden="true">
        <Cube x={1} y={0} s={8} />
        <Cube x={1} y={6} s={7} />
        <Cube x={6} y={5} s={8} />
        <path d="M13 12.500h9" stroke="#111" />
        <path d="M4.500 13v11M5 18.500h5" stroke="#1a1a9a" />
        <Cube x={12} y={15} s={8} />
      </svg>
    </button>
    {resources.map(({ label, height, art }) => (
      <button key={label} type="button" aria-label={label} className={`flex shrink-0 items-center justify-center pl-1 ${height}`}>
        <svg viewBox="0 0 23 23" className="size-[23px]" aria-hidden="true">{art}</svg>
      </button>
    ))}
  </aside>
);

const emptyRows = Array.from({ length: 60 }, (_, i) => i);

const Navigator: React.FC = () => (
  <section className="flex w-[674px] shrink-0 flex-col border-r border-[#84979b] bg-white pr-2.5 pl-1.5">
    <header className="flex h-7 shrink-0 items-center justify-between pt-0.5 pr-1.5 pl-1 text-[12px]">
      <h2>装配导航器</h2>
      <button type="button" aria-label="最大化" className="h-[11px] w-3 border border-t-2 border-[#111]" />
    </header>
    <div className="min-h-0 grow overflow-hidden border border-b-0 border-[#dcdcdc] pt-px pl-px">
      <table className="w-full table-fixed border-separate border-spacing-0 text-[12px]">
        <colgroup>
          <col className="w-[443px]" />
          <col className="w-[94px]" />
          <col className="w-[109px]" />
          <col />
        </colgroup>
        <thead>
          <tr className="h-[21px] bg-[#efefef] text-left leading-5 [&>th]:border-b [&>th]:border-[#cfcfcf] [&>th]:p-0 [&>th]:pl-1.5 [&>th]:font-normal">
            <th className="border-r">描述性部件名</th>
            <th className="border-r">信息</th>
            <th className="border-r">只读</th>
            <th className="overflow-hidden whitespace-nowrap">已</th>
          </tr>
        </thead>
        <tbody className="[&_td]:h-5 [&_td]:border-r [&_td]:border-b [&_td]:border-[#e8e8e8] [&_td]:p-0 [&_td]:leading-[19px] [&_td:first-child]:border-r-black [&_td:last-child]:border-r-0 [&_tr:nth-child(even)]:bg-[#fafafa]">
          <tr>
            <td>
              <span className="flex h-[19px] items-center pl-[9px]">
                <svg width="9" height="19" className="overflow-visible" aria-hidden="true">
                  <path d="M.5 31V10.500H9M.5 30.500H9" fill="none" stroke="#999" strokeDasharray="1 1" />
                </svg>
                <span className="flex items-center gap-1"><Icon name="folder" />截面</span>
              </span>
            </td>
            <td /><td /><td />
          </tr>
          <tr>
            <td>
              <label className="flex h-[19px] items-center gap-[3px] pl-[21px] font-bold">
                <span className="relative size-3">
                  <input type="checkbox" defaultChecked className="block size-3 appearance-none border border-black bg-white" />
                  <svg viewBox="0 0 12 12" className="pointer-events-none absolute inset-0" aria-hidden="true">
                    <path d="M3 5.500l2.500 4L10 2.500" fill="none" stroke="#e01818" strokeWidth="2" />
                  </svg>
                </span>
                <Icon name="part" />
                _NPart_4768200_stp
              </label>
            </td>
            <td />
            <td><span className="flex pl-1"><Icon name="save" /></span></td>
            <td><span className="ml-[5px] block h-3.5 border border-r-0 border-[#4a5bc8]" /></td>
          </tr>
          {emptyRows.map((i) => (
            <tr key={i}><td /><td /><td /><td /></tr>
          ))}
        </tbody>
      </table>
    </div>
  </section>
);

// one axis of the coordinate triad, pointing up from the origin
const Axis: React.FC<{ angle: number; length: number; color: string; dark: string }> = ({ angle, length, color, dark }) => (
  <g transform={`rotate(${angle})`}>
    <path d={`M0 0l-2-${length * 0.5}h4z`} fill={color} />
    <path d={`M-3-${length * 0.6}L0-${length}l3 ${length * 0.4}z`} fill={color} />
    <path d={`M1-${length * 0.9}l2 ${length * 0.3}H1z`} fill={dark} />
    <path d={`M-3-${length * 0.6}h6l-1 ${length * 0.17}h-4z`} fill="#b0a27e" stroke="#7a7054" strokeWidth=".5" />
  </g>
);

const Viewport: React.FC = () => (
  <div className="relative min-h-0 grow overflow-hidden border-l border-[#d8d8d8] bg-linear-to-b from-[#b3b4b6] via-[#d6d7d9] via-50% to-[#e7e8ea] to-90%">
    <svg className="absolute inset-0 size-full" fontFamily="Liberation Sans, sans-serif" aria-label="图形窗口">
      <g fill="none" stroke="#2058d0" strokeWidth="1.5">
        <ellipse cx="312" cy="656" rx="212" ry="161.5" transform="rotate(6.6 312 656)" />
        <ellipse cx="312" cy="656" rx="210.5" ry="159" transform="rotate(6.6 312 656)" />
      </g>
      <g fill="none" stroke="#d4609a" strokeWidth="1.8">
        <path d="M400 511l30-5M438 504l28-5-31 30-30 32-3 3-2-29M400 535v-24M402 518l12 18M417 543l14 25 2-18M434 536l4-39M438 497l-21 49M438 497l9 6M450 504l9 5" />
        <path d="M400 511l14 8M424 546l10-14M409 558l8-10" strokeWidth="4" />
      </g>
      <g transform="translate(931 815)">
        <Axis angle={5} length={37} color="#1a34c8" dark="#0a1a80" />
        <Axis angle={46} length={47} color="#35b035" dark="#1f8a1f" />
        <Axis angle={122} length={53} color="#e02828" dark="#b81a1a" />
        <circle r="1.5" fill="#555" />
        <g fontSize="13">
          <text x="-7" y="-32" fill="#9a8e70">Z</text>
          <text x="-14" y="-37" fill="#2038e0">ZC</text>
          <text x="19" y="-30" fill="#9a8e70">Y</text>
          <text x="16" y="-35" fill="#2aa02a">YC</text>
          <text x="29" y="38" fill="#9a8e70">X</text>
          <text x="28" y="43" fill="#e02020">XC</text>
        </g>
      </g>
    </svg>
    <svg width="90" height="25" className="absolute bottom-0 left-[54px]" fontFamily="Liberation Sans, sans-serif" aria-hidden="true">
      <path d="M26 25V21L42 8l24 15v2z" fill="#d0d2d2" stroke="#aaa" strokeWidth="1.2" />
      <path d="M42 8l-1 17" stroke="#b0b0b0" />
      <path d="M40 25l13-10-6 10z" fill="#a4cda4" />
      <path d="M25 12l4 7-2 6h-4l-2-6z" fill="#12239a" />
      <text x="21" y="12" fontSize="12" fill="#2050f0">Z</text>
      <text x="52" y="16" fontSize="11" fill="#2aa02a">Y</text>
    </svg>
    <p className="absolute right-1 bottom-0 flex items-center text-[16px] leading-6 font-light text-[#444] [text-shadow:1px_1px_0_#fff]">
      <span className="font-['Liberation_Mono',monospace] text-[14px]">UG</span>
      爱好者论坛
      <span className="font-['Liberation_Mono',monospace] text-[13px]">@langfather</span>
    </p>
  </div>
);

const Workspace: React.FC = () => (
  <main className="flex min-w-0 grow flex-col">
    <div className="flex h-[23px] shrink-0 border-b-2 border-[#54a1b9] bg-white">
      <div className="flex items-center gap-1.5 bg-[#54a1b9] pr-[7px] pl-1.5 text-[12px] text-white">
        <Icon name="partBlue" />
        <span>_NPart_4768200_stp.prt</span>
        <svg width="10" height="12" className="overflow-visible" aria-hidden="true">
          <path d="M8 8v3H1V1h5l2 2M4 8l4-4" fill="none" stroke="#fff" strokeWidth="1.5" />
        </svg>
        <button type="button" aria-label="关闭">
          <svg width="9" height="9" aria-hidden="true"><path d="M1 1l7 7M8 1L1 8" stroke="#fff" strokeWidth="2" /></svg>
        </button>
      </div>
    </div>
    <Viewport />
  </main>
);

const App: React.FC = () => (
  <div className="flex h-screen flex-col overflow-hidden bg-white font-['Open_Sans','Noto_Sans_CJK_SC',sans-serif] text-[#1a1a1a]">
    <svg className="absolute size-0" aria-hidden="true">
      <defs>
        <linearGradient id="datumFill" x1="0" y1="0" x2="1" y2="1">
          <stop offset="0" stopColor="#d8e2da" />
          <stop offset=".4" stopColor="#f6f6f6" />
          <stop offset="1" stopColor="#cfe0cf" />
        </linearGradient>
        <linearGradient id="rainbow" x1="0" y1="0" x2="0" y2="1">
          <stop offset="0" stopColor="#f00" />
          <stop offset=".3" stopColor="#ff0" />
          <stop offset=".6" stopColor="#0e0" />
          <stop offset=".8" stopColor="#0cf" />
          <stop offset="1" stopColor="#00f" />
        </linearGradient>
      </defs>
    </svg>
    <TabBar />
    <Ribbon />
    <Toolbar />
    <div className="flex min-h-0 grow">
      <ResourceBar />
      <Navigator />
      <Workspace />
    </div>
  </div>
);

export default App;
